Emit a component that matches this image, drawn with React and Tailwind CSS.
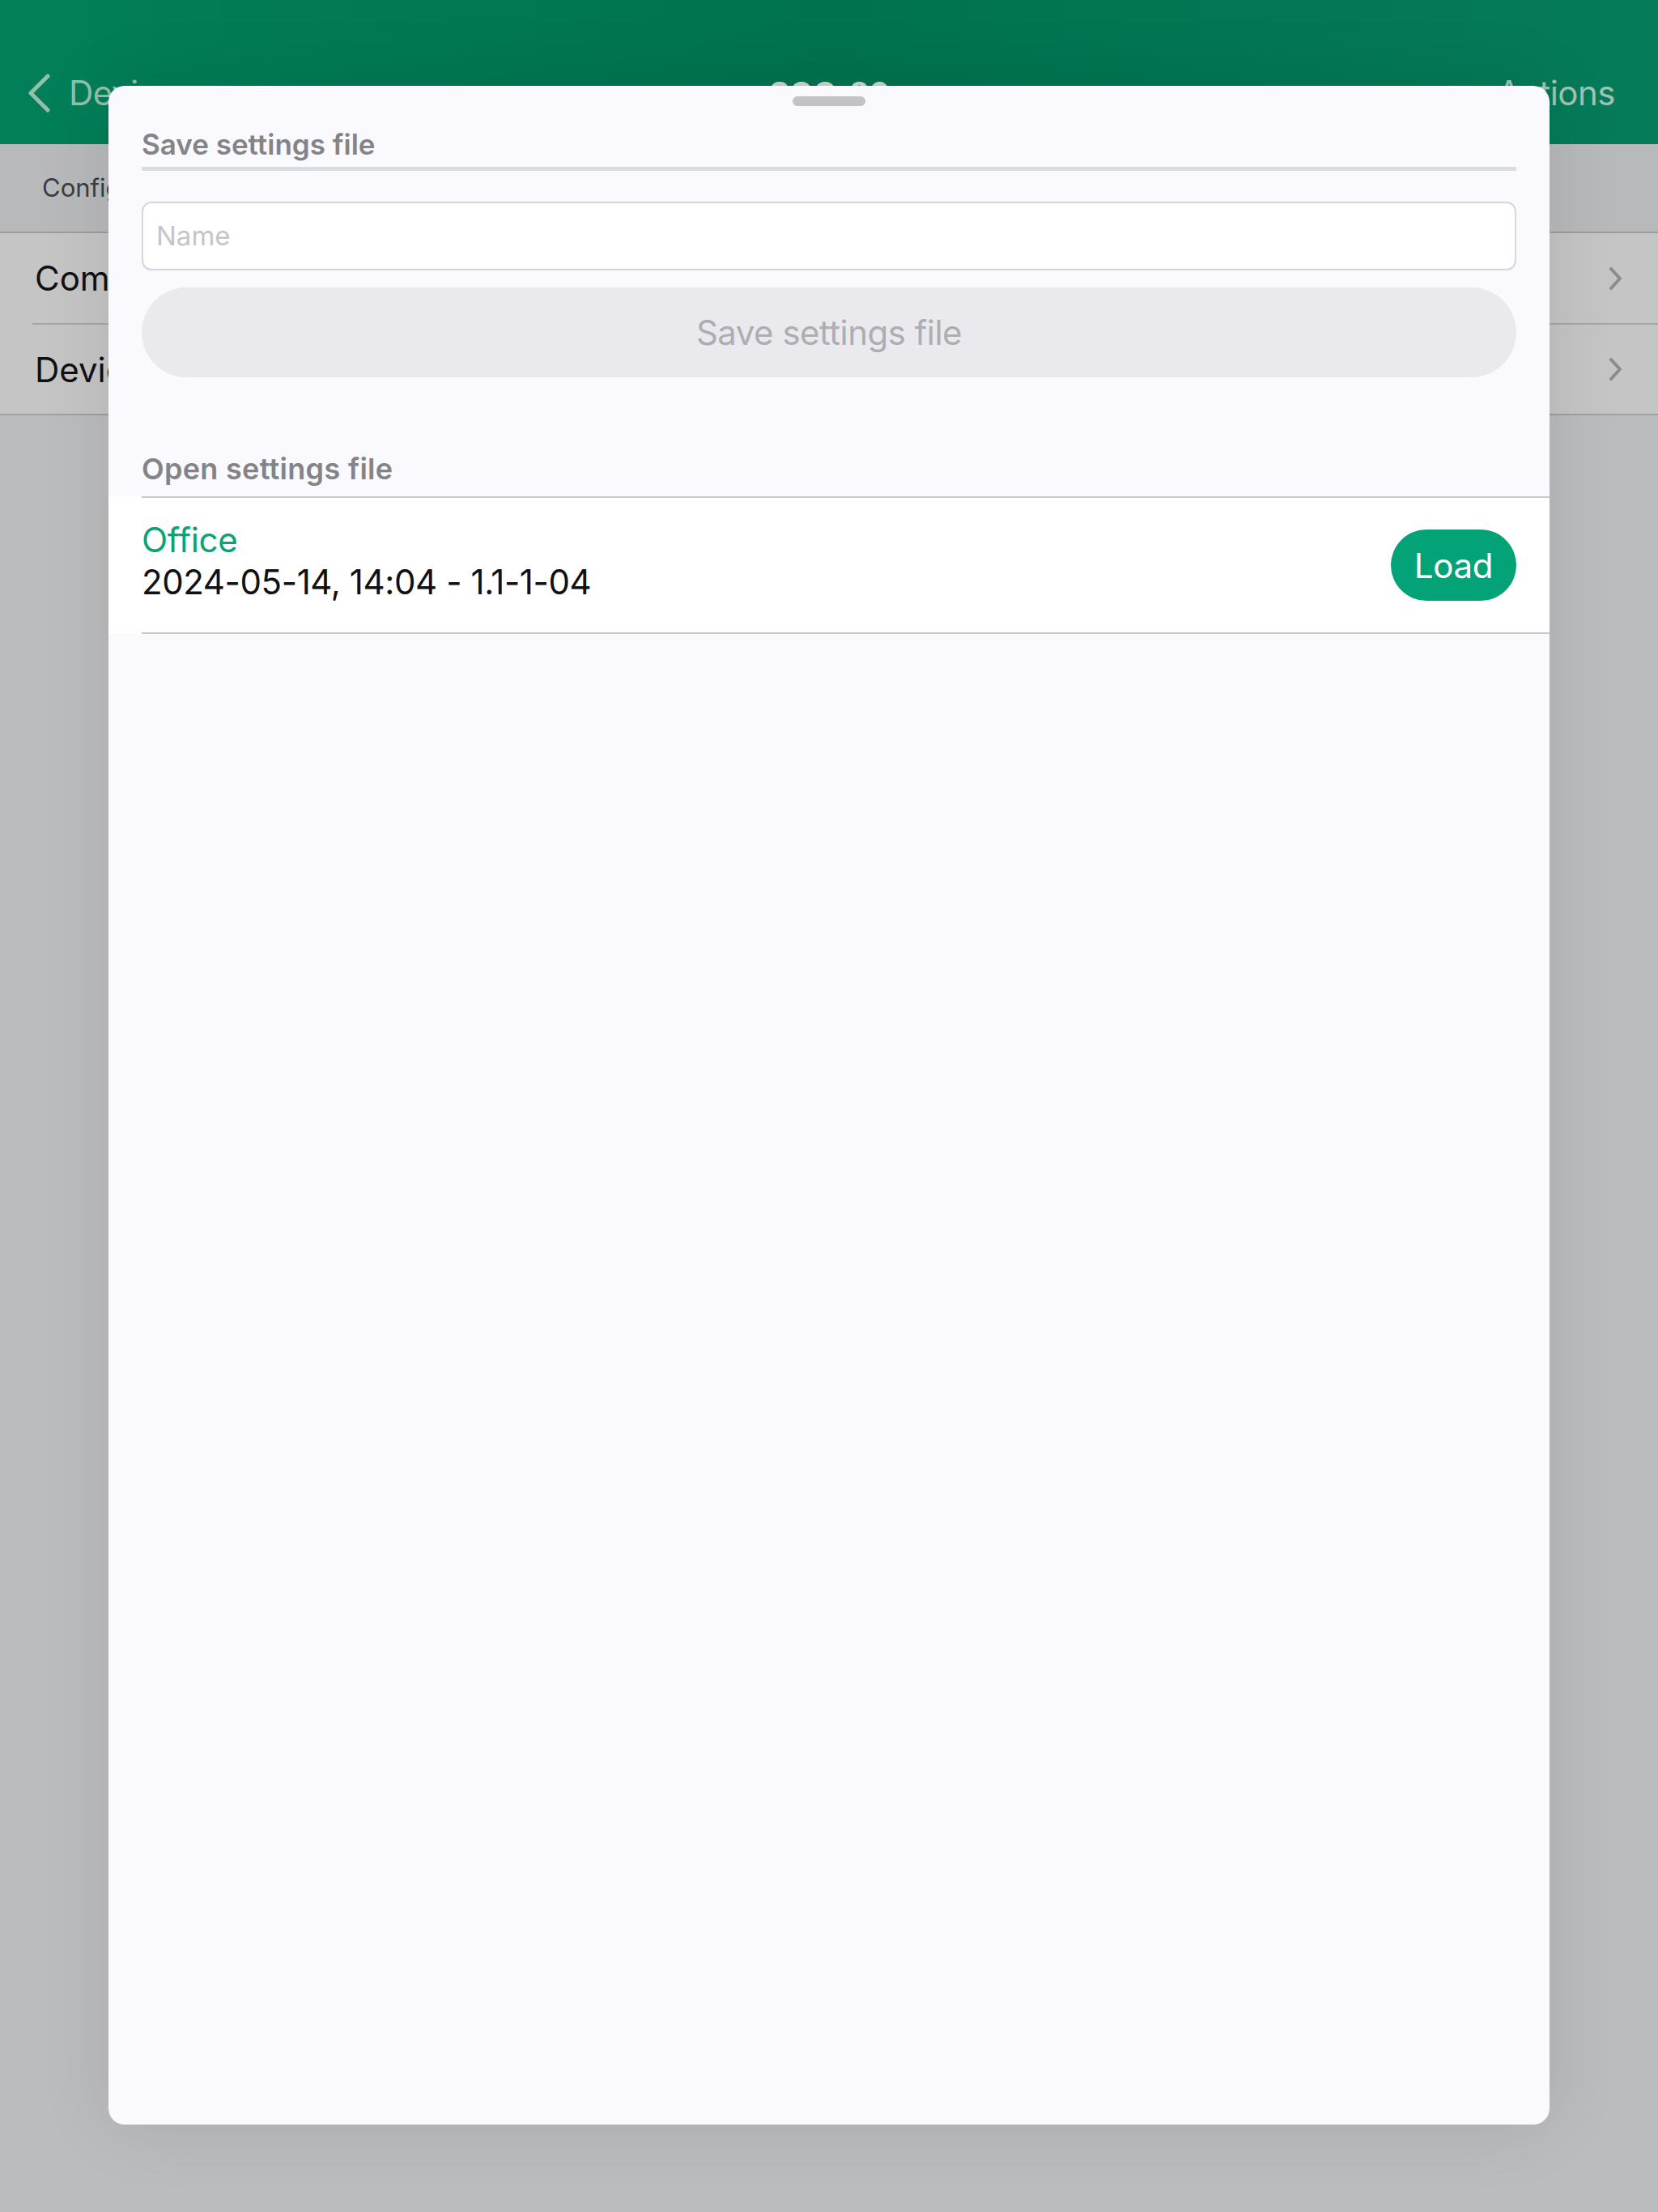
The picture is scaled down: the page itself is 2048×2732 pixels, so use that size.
import React from "react";

const font = { fontFamily: "Inter, 'Noto Sans', sans-serif" };

function Chevron({ className }) {
  return (
    <svg viewBox="0 0 20 32" className={className} fill="none">
      <path d="M4 4 L15 16 L4 28" stroke="currentColor" strokeWidth="4" strokeLinecap="round" strokeLinejoin="round" />
    </svg>
  );
}

export default function App() {
  return (
    <div className="relative w-[2048px] h-[2732px] overflow-hidden bg-[#bbbcbd]" style={font}>
      {/* Background page (dimmed) */}
      <div className="flex flex-col">
        <div className="h-[178px] bg-gradient-to-r from-[#027f59] via-[#00724f] to-[#067b5a] flex items-end pb-[38px] px-[33px] relative">
          <div className="flex items-center gap-[22px] text-[#93bfad]">
            <svg viewBox="0 0 30 48" className="w-[30px] h-[48px]" fill="none">
              <path d="M26 3 L5 24 L26 45" stroke="currentColor" strokeWidth="5" strokeLinecap="round" strokeLinejoin="round" />
            </svg>
            <span className="text-[42px] leading-[50px] tracking-[-0.5px]">Devices</span>
          </div>
          <div className="flex-1 flex justify-center pr-[40px]">
            <span className="text-[#c9d6d0] text-[38px] font-bold leading-[50px] mt-[14px]">SOC-20</span>
          </div>
          <span className="text-[42px] leading-[50px] text-[#9fc4b4] mr-[20px] tracking-[-0.5px]">Actions</span>
        </div>
        <div className="h-[110px] bg-[#b7b9ba] flex items-center pl-[52px] border-b-2 border-[#9c9d9e]">
          <span className="text-[31px] text-[#3b3d3f]">Configuration</span>
        </div>
        <div className="bg-[#c4c5c4] flex flex-col">
          <div className="h-[111px] flex items-center pl-[43px] pr-[42px]">
            <span className="flex-1 text-[42px] text-[#111]">Communication</span>
            <Chevron className="w-[20px] h-[32px] text-[#8a8b8b]" />
          </div>
          <div className="ml-[40px] h-[2px] bg-[#a4a5a5]" />
          <div className="h-[110px] flex items-center pl-[43px] pr-[42px]">
            <span className="flex-1 text-[42px] text-[#111]">Device</span>
            <Chevron className="w-[20px] h-[32px] text-[#8a8b8b]" />
          </div>
        </div>
        <div className="h-[2px] bg-[#9e9fa0]" />
      </div>

      {/* Sheet */}
      <div className="absolute left-[134px] top-[106px] w-[1780px] h-[2518px] rounded-[20px] bg-[#f9f9fe] shadow-[0_0_90px_rgba(0,0,0,0.10)] flex flex-col">
        <div className="absolute left-1/2 -translate-x-1/2 top-[13px] w-[90px] h-[12px] rounded-full bg-[#c2c2c7]" />
        <div className="px-[41px] pt-[52px] flex flex-col">
          <div className="text-[35px] leading-[40px] font-semibold text-[#848488]">Save settings file</div>
          <div className="mt-[8px] h-[5px] bg-[#d9dce1]" />
          <div className="mt-[38px] h-[85px] rounded-[12px] border-2 border-[#d6d6da] bg-white flex items-center px-[16px]">
            <span className="text-[33px] text-[#c5c5c8]">Name</span>
          </div>
          <div className="mt-[21px] h-[111px] rounded-full bg-[#e9e9ee] flex items-center justify-center">
            <span className="text-[42px] text-[#aeaeb2] tracking-[-0.5px]">Save settings file</span>
          </div>
          <div className="mt-[93px] text-[36px] leading-[40px] font-semibold text-[#848488] tracking-[0.3px]">Open settings file</div>
        </div>
        <div className="mt-[14px] bg-white flex flex-col">
          <div className="ml-[41px] h-[2px] bg-[#c8c8cc]" />
          <div className="h-[166px] flex items-center pl-[41px] pr-[41px]">
            <div className="flex-1 flex flex-col mb-[10px]">
              <span className="text-[42px] leading-[52px] text-[#07a474] tracking-[-0.3px]">Office</span>
              <span className="text-[42px] leading-[52px] text-[#111] tracking-[-0.4px]">2024-05-14, 14:04 - 1.1-1-04</span>
            </div>
            <div className="w-[155px] h-[88px] rounded-full bg-[#03a277] flex items-center justify-center">
              <span className="text-[42px] text-white tracking-[-0.3px]">Load</span>
            </div>
          </div>
          <div className="ml-[41px] h-[2px] bg-[#c8c8cc]" />
        </div>
      </div>
    </div>
  );
}
